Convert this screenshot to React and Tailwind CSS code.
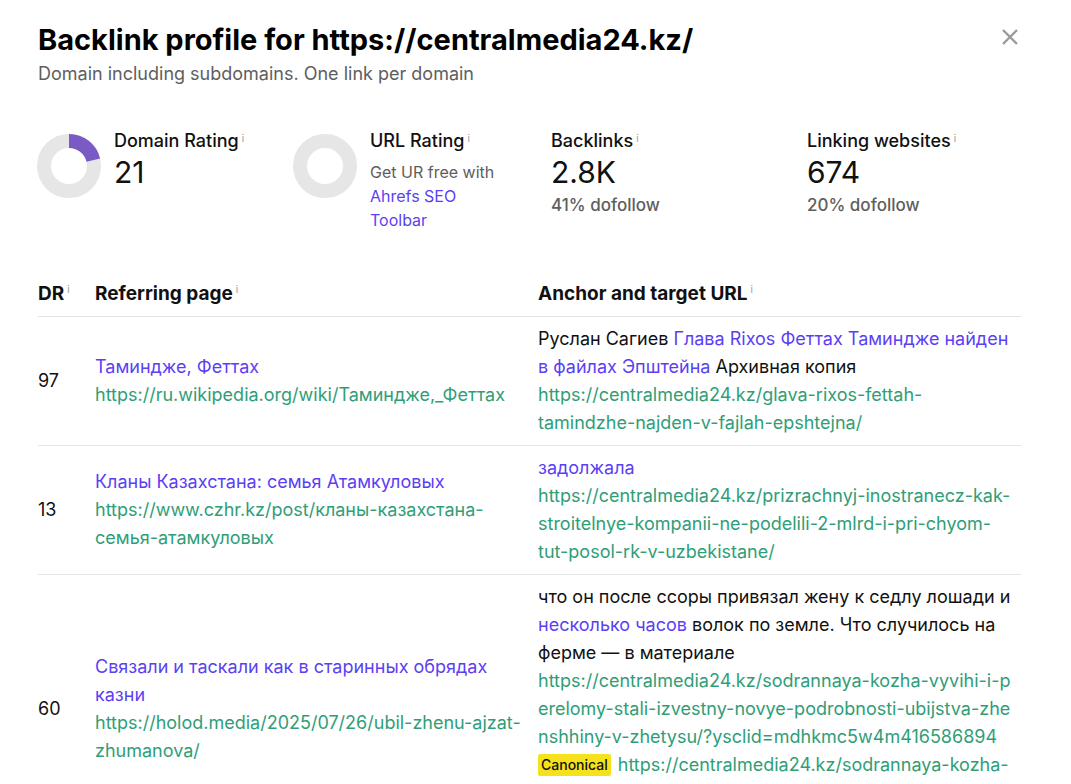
import React from "react";

const purple = "text-[#5b3ff5]";
const green = "text-[#2f9e78]";

function Info() {
  return <sup className="ml-[3px] text-[10px] font-normal text-[#9a9a9a] align-top leading-none relative top-[3px]">i</sup>;
}

function Donut({ value }) {
  const r = 25;
  const c = 2 * Math.PI * r;
  return (
    <svg width="64" height="64" viewBox="0 0 64 64" className="shrink-0">
      <circle cx="32" cy="32" r={r} fill="none" stroke="#e6e6e6" strokeWidth="14" />
      {value > 0 && (
        <circle
          cx="32"
          cy="32"
          r={r}
          fill="none"
          stroke="#7a5bc6"
          strokeWidth="14"
          strokeDasharray={`${(c * value) / 100} ${c}`}
          transform="rotate(-90 32 32)"
        />
      )}
    </svg>
  );
}

const rows = [
  {
    dr: 97,
    title: "Таминдже, Феттах",
    url: "https://ru.wikipedia.org/wiki/Таминдже,_Феттах",
    anchor: (
      <>
        <span>Руслан Сагиев </span>
        <span className={purple}>Глава Rixos Феттах Таминдже найден в файлах Эпштейна</span>
        <span> Архивная копия</span>
      </>
    ),
    target: (
      <div className={green}>https://centralmedia24.kz/glava-rixos-fettah-tamindzhe-najden-v-fajlah-epshtejna/</div>
    ),
  },
  {
    dr: 13,
    title: "Кланы Казахстана: семья Атамкуловых",
    url: "https://www.czhr.kz/post/кланы-казахстана-семья-атамкуловых",
    anchor: <span className={purple}>задолжала</span>,
    target: (
      <div className={green}>
        https://centralmedia24.kz/prizrachnyj-inostranecz-kak-stroitelnye-kompanii-ne-podelili-2-mlrd-i-pri-chyom-tut-posol-rk-v-uzbekistane/
      </div>
    ),
  },
  {
    dr: 60,
    title: "Связали и таскали как в старинных обрядах казни",
    url: "https://holod.media/2025/07/26/ubil-zhenu-ajzat-zhumanova/",
    anchor: (
      <>
        <span>что он после ссоры привязал жену к седлу лошади и </span>
        <span className={purple}>несколько часов</span>
        <span> волок по земле. Что случилось на ферме — в материале</span>
      </>
    ),
    target: (
      <>
        <div className={`${green} break-all`}>
          https://centralmedia24.kz/sodrannaya-kozha-vyvihi-i-perelomy-stali-izvestny-novye-podrobnosti-ubijstva-zhenshhiny-v-zhetysu/?ysclid=mdhkmc5w4m416586894
        </div>
        <div className={green}>
          <span className="inline-block bg-[#f6e21c] text-[#111] text-[14px] font-medium leading-[22px] px-[3px] rounded-[2px] mr-[7px] align-[1px]">
            Canonical
          </span>
          https://centralmedia24.kz/sodrannaya-kozha-vyvihi-i-perelomy-stali-izvestny-novye-podrobnosti-ubijstva-zhenshhiny-v-zhetysu/
        </div>
      </>
    ),
  },
];

export default function App() {
  return (
    <div className="min-h-screen bg-white font-['Inter',sans-serif] text-[#111]">
      <div className="pl-[38px] pr-[50px] pt-[22px] pb-10">
        <header className="flex items-start justify-between">
          <div>
            <h1 className="text-[29px] font-bold leading-[36px] text-black">
              Backlink profile for https://centralmedia24.kz/
            </h1>
            <p className="mt-[3px] text-[18px] leading-[26px] text-[#5e5e5e]">
              Domain including subdomains. One link per domain
            </p>
          </div>
          <button className="mt-[6px] mr-[2px] text-[#9a9a9a]">
            <svg width="18" height="18" viewBox="0 0 18 18" fill="none" stroke="currentColor" strokeWidth="2.4">
              <path d="M2 2 L16 16 M16 2 L2 16" />
            </svg>
          </button>
        </header>

        <section className="mt-[43px] grid grid-cols-[256px_257px_256px_256px]">
          <div className="flex gap-[13px] -ml-[1px]">
            <div className="mt-[4px]">
              <Donut value={21} />
            </div>
            <div>
              <p className="text-[18px] font-medium leading-[22px]">
                Domain Rating
                <Info />
              </p>
              <p className="mt-[2px] text-[30px] leading-[36px]">21</p>
            </div>
          </div>
          <div className="flex gap-[13px] -ml-[1px]">
            <div className="mt-[4px]">
              <Donut value={0} />
            </div>
            <div>
              <p className="text-[18px] font-medium leading-[22px]">
                URL Rating
                <Info />
              </p>
              <p className="mt-[8px] text-[16px] leading-[24px] text-[#5e5e5e]">Get UR free with</p>
              <p className={`text-[16px] leading-[24px] w-[110px] ${purple}`}>Ahrefs SEO Toolbar</p>
            </div>
          </div>
          <div>
            <p className="text-[18px] font-medium leading-[22px]">
              Backlinks
              <Info />
            </p>
            <p className="mt-[2px] text-[30px] leading-[36px]">2.8K</p>
            <p className="mt-[3px] text-[17px] font-medium leading-[24px] text-[#5e5e5e]">41% dofollow</p>
          </div>
          <div>
            <p className="text-[18px] font-medium leading-[22px]">
              Linking websites
              <Info />
            </p>
            <p className="mt-[2px] text-[30px] leading-[36px]">674</p>
            <p className="mt-[3px] text-[17px] font-medium leading-[24px] text-[#5e5e5e]">20% dofollow</p>
          </div>
        </section>

        <table className="mt-[49px] w-[983px] border-collapse table-fixed">
          <colgroup>
            <col className="w-[57px]" />
            <col className="w-[443px]" />
            <col className="w-[483px]" />
          </colgroup>
          <thead>
            <tr className="border-b border-[#e4e4e4]">
              <th className="pb-[9px] text-left text-[19px] font-bold leading-[26px]">
                DR
                <Info />
              </th>
              <th className="pb-[9px] text-left text-[19px] font-bold leading-[26px]">
                Referring page
                <Info />
              </th>
              <th className="pb-[9px] text-left text-[19px] font-bold leading-[26px]">
                Anchor and target URL
                <Info />
              </th>
            </tr>
          </thead>
          <tbody>
            {rows.map((row) => (
              <tr key={row.dr} className="border-b border-[#e4e4e4] text-[18px] leading-[28px]">
                <td className="pt-[8px] pb-[8px] align-middle">{row.dr}</td>
                <td className="pt-[8px] pb-[8px] pr-[12px] align-middle">
                  <div className={purple}>{row.title}</div>
                  <div className={`${green} break-words`}>{row.url}</div>
                </td>
                <td className="pt-[8px] pb-[8px] pr-[6px] align-middle">
                  <div>{row.anchor}</div>
                  {row.target}
                </td>
              </tr>
            ))}
          </tbody>
        </table>
      </div>
    </div>
  );
}
